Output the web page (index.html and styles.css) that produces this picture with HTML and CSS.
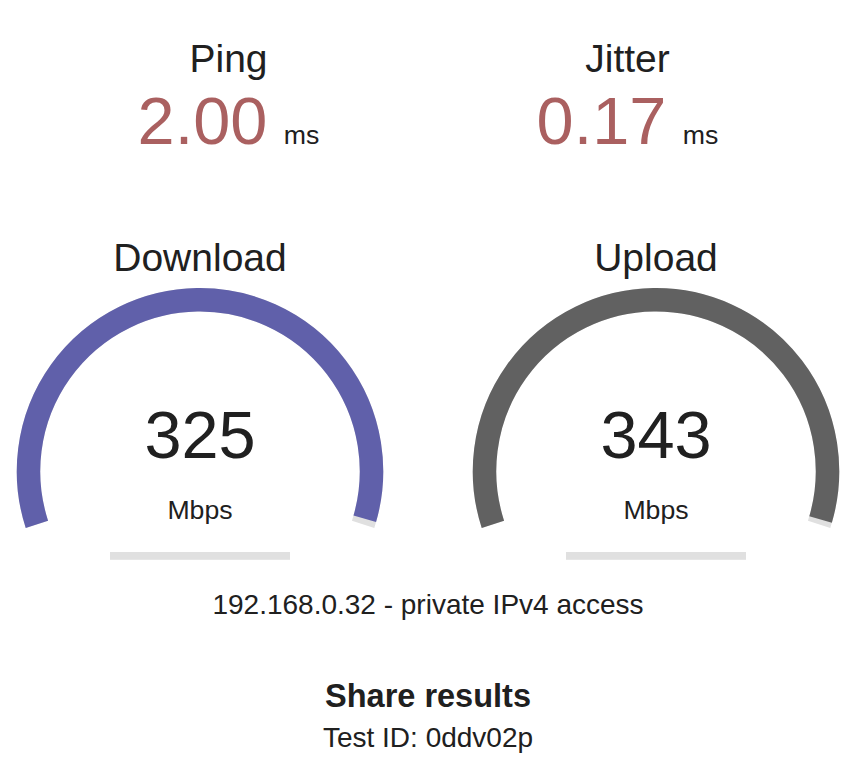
FILE: index.html
```html
<!DOCTYPE html>
<html lang="en">
<head>
  <meta charset="UTF-8">
  <meta name="viewport" content="width=device-width, initial-scale=1.0">
  <title>Speedtest</title>
  <link rel="stylesheet" href="styles.css">
</head>
<body>

<div class="page">
  <div class="latency">
    <div class="small-test">
      <div class="test-name">Ping</div>
      <div class="small-value"><span class="ping-num">2.00</span> <span class="unit">ms</span></div>
    </div>
    <div class="small-test">
      <div class="test-name">Jitter</div>
      <div class="small-value"><span class="ping-num">0.17</span> <span class="unit">ms</span></div>
    </div>
  </div>

  <div class="gauges">
    <div class="gauge-test">
      <div class="test-name">Download</div>
      <div class="gauge">
        <svg class="meter" width="400" height="290" viewBox="0 0 400 290">
          <path d="M 36.9 245.3 A 171.5 171.5 0 1 1 363.1 245.3" fill="none" stroke="#e0e0e0" stroke-width="23.5"/>
          <path d="M 36.9 245.3 A 171.5 171.5 0 1 1 364.77 239.86" fill="none" stroke="#6060aa" stroke-width="23.5"/>
          <rect x="110" y="273" width="180" height="7.8" fill="#e0e0e0"/>
        </svg>
        <div class="readout">
          <div class="big-num">325</div>
          <div class="gauge-unit">Mbps</div>
        </div>
      </div>
    </div>
    <div class="gauge-test">
      <div class="test-name">Upload</div>
      <div class="gauge">
        <svg class="meter" width="400" height="290" viewBox="0 0 400 290">
          <path d="M 36.9 245.3 A 171.5 171.5 0 1 1 363.1 245.3" fill="none" stroke="#e0e0e0" stroke-width="23.5"/>
          <path d="M 36.9 245.3 A 171.5 171.5 0 1 1 364.59 240.49" fill="none" stroke="#616161" stroke-width="23.5"/>
          <rect x="110" y="273" width="180" height="7.8" fill="#e0e0e0"/>
        </svg>
        <div class="readout">
          <div class="big-num">343</div>
          <div class="gauge-unit">Mbps</div>
        </div>
      </div>
    </div>
  </div>

  <div class="ip-area">192.168.0.32 - private IPv4 access</div>

  <div class="share">
    <h3>Share results</h3>
    <div class="test-id">Test ID: 0ddv02p</div>
  </div>
</div>

</body>
</html>
```

FILE: styles.css
```css
body {
  margin: 0;
  background: #ffffff;
  color: #202020;
  font-family: "Liberation Sans", Arial, sans-serif;
}

.page {
  width: 856px;
  padding-top: 37px;
  text-align: center;
}

.latency {
  display: flex;
  justify-content: center;
  gap: 99px;
}

.small-test {
  width: 300px;
}

.test-name {
  font-size: 39px;
  line-height: 43px;
}

.small-value {
  margin-top: 3px;
  font-size: 66.67px;
  line-height: 77px;
  white-space: nowrap;
}

.ping-num {
  color: #aa6060;
}

.unit {
  margin-left: -2px;
  font-size: 26.67px;
  line-height: normal;
  color: #202020;
}

.gauges {
  display: flex;
  justify-content: center;
  gap: 56px;
  margin-top: 76px;
}

.gauge-test {
  width: 400px;
}

.gauge {
  position: relative;
  height: 290px;
}

.meter {
  display: block;
}

.readout {
  position: absolute;
  top: 118px;
  left: 0;
  width: 100%;
}

.big-num {
  font-size: 66.67px;
  line-height: 76px;
}

.gauge-unit {
  margin-top: 22px;
  font-size: 26.67px;
  line-height: 31px;
}

.ip-area {
  margin-top: 20px;
  font-size: 28px;
  line-height: 32px;
}

.share h3 {
  margin: 57px 0 0 0;
  font-size: 32.5px;
  line-height: 37px;
  font-weight: bold;
}

.test-id {
  margin-top: 7px;
  font-size: 28px;
  line-height: 32px;
}
```
